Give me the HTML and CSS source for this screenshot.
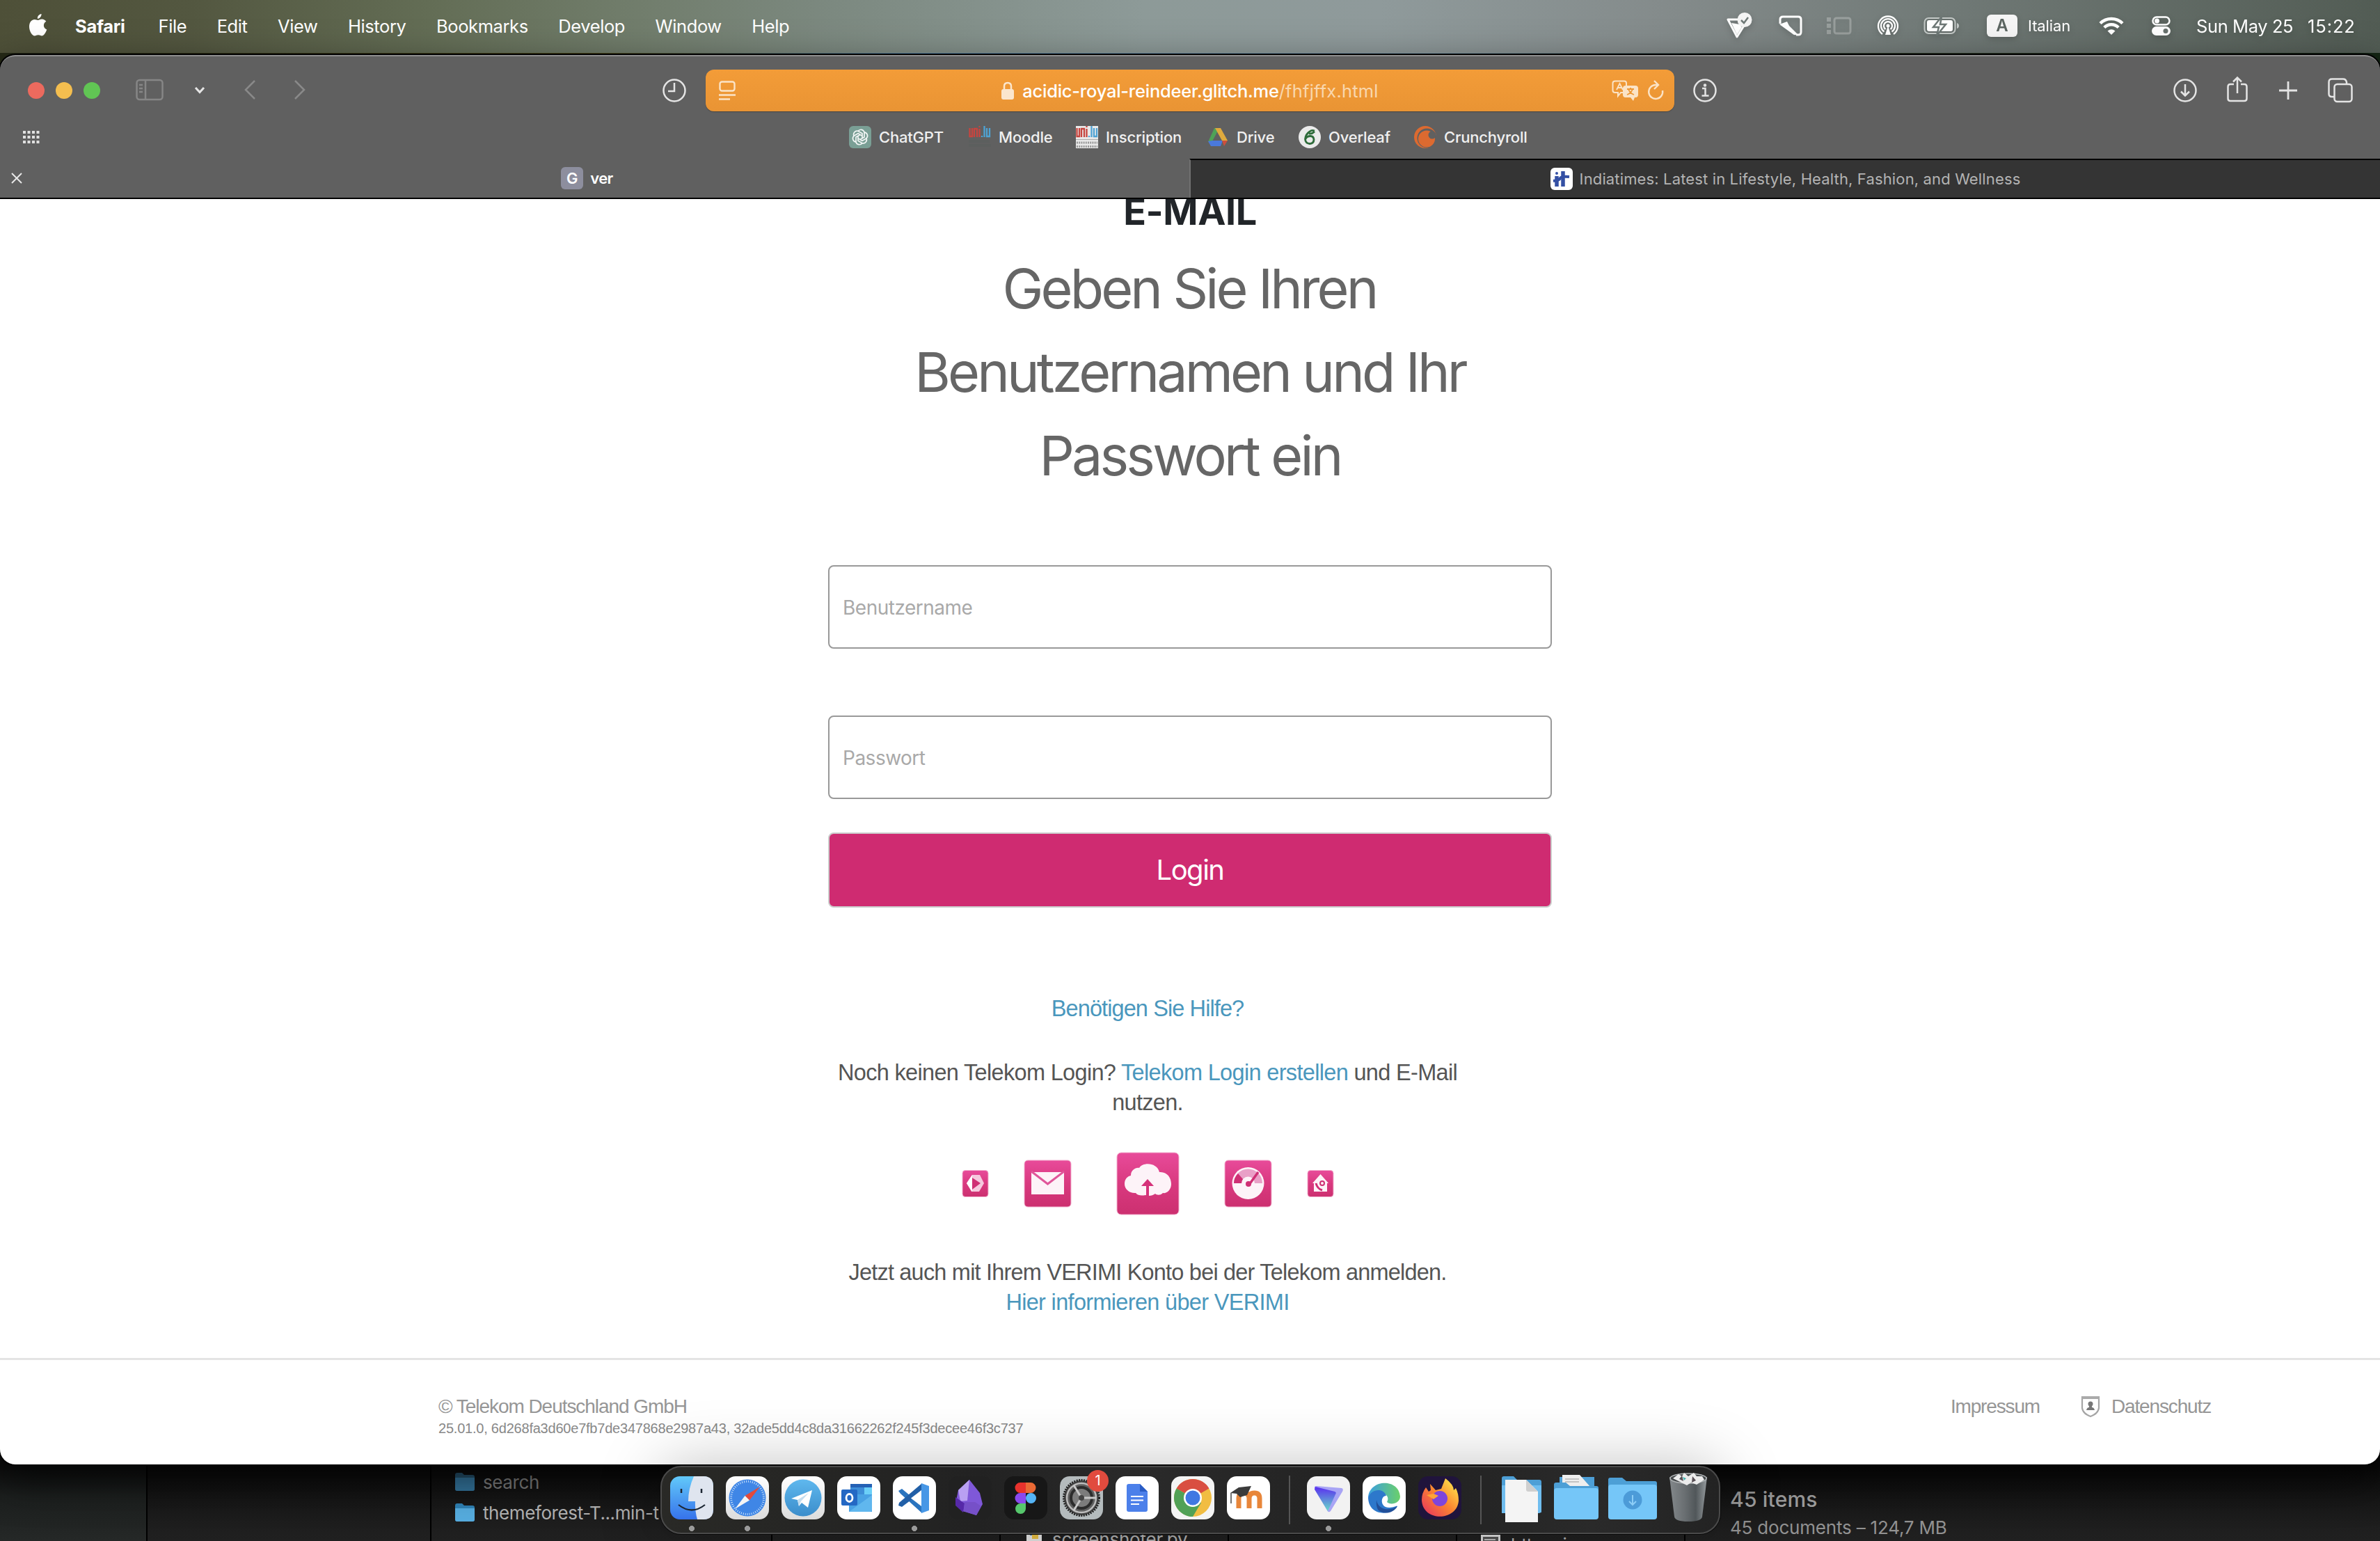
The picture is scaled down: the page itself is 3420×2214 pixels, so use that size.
FILE: index.html
```html
<!DOCTYPE html>
<html lang="de">
<head>
<meta charset="utf-8">
<title>ver</title>
<link rel="stylesheet" href="styles.css">
</head>
<body>
<div class="desktop">

<header class="menubar">
  <nav class="menus">
    <svg class="apple" viewBox="0 0 26 32"><path fill="#fff" d="M18 0c.4 3-2.3 6.800-5.600 6.800C12 3.500 14.800.5 18 0zM13 9c1.500 0 3-1.500 5.800-1.500 2.400 0 4.700 1.300 6 3.300-5 3-4.300 9.800 1 11.800C24 27.500 21.300 31.500 18.700 31.500c-2 0-2.800-1.200-5.200-1.200s-3.300 1.200-5.200 1.200C4.500 31.500.5 24.500.5 18.300.5 11.500 4.500 8 8 8c2.300 0 3.600 1 5 1z"/></svg>
    <b class="m-safari">Safari</b><span>File</span><span>Edit</span><span>View</span><span>History</span><span>Bookmarks</span><span>Develop</span><span>Window</span><span>Help</span>
  </nav>
  <div class="status">
    <svg class="s-vpn" width="38" height="38" viewBox="0 0 38 38"><path d="M2 10h17l6 9-10 16z" fill="none" stroke="#fff" stroke-width="3" stroke-linejoin="round"/><path d="M7 15l12 2 3 4-7 11z" fill="#fff"/><circle cx="26" cy="10.500" r="10.500" fill="#f4f4f4"/><path d="M21 11l4 4 6-8" fill="none" stroke="#707a78" stroke-width="2.500"/></svg>
    <svg class="s-pen" width="34" height="30" viewBox="0 0 34 30"><path d="M2 12V6q0-4 4-4h22q4 0 4 4v18q0 4-4 4h-3" fill="none" stroke="#fff" stroke-width="3"/><path d="M1 13l11-4 3 6 12 12q-4 3-8-1z" fill="#fff"/></svg>
    <svg class="s-stage" width="36" height="26" viewBox="0 0 36 26" opacity=".25"><path fill="#fff" d="M0 1h6v6H0zM0 10h6v6H0zM0 19h6v6H0z"/><rect x="11" y="2" width="23" height="22" rx="3" fill="none" stroke="#fff" stroke-width="3"/></svg>
    <svg class="s-drop" width="32" height="30" viewBox="0 0 32 30" fill="none" stroke="#fff" stroke-width="2.300"><path d="M8 27a14 14 0 1 1 16 0M10.500 23.500a10 10 0 1 1 11 0M12.500 20a6 6 0 1 1 7 0"/><path d="M16 15l4 13h-8z" fill="#fff" stroke="none"/><circle cx="16" cy="15" r="2.500" fill="#fff" stroke="none"/></svg>
    <svg class="s-batt" width="52" height="28" viewBox="0 0 52 28"><rect x="1.500" y="3" width="44" height="22" rx="6" fill="none" stroke="#c3c8c6" stroke-width="2"/><rect x="5" y="6" width="37" height="16" rx="3" fill="#fff"/><path d="M48 10q3 1 3 4t-3 4z" fill="#c3c8c6"/><path d="M26 1L14 16h8l-3 12 13-16h-8z" fill="#fff" stroke="#6d7775" stroke-width="2.500"/></svg>
    <span class="s-key">A</span><span class="s-lang">Italian</span>
    <svg class="s-wifi" width="36" height="26" viewBox="0 0 36 26" fill="none" stroke="#fff" stroke-width="4.500"><path d="M2 9.500a23 23 0 0 1 32 0M7.800 15.500a14.500 14.500 0 0 1 20.400 0"/><path d="M18 26l-5.500-5.500q5.500-4.500 11 0z" fill="#fff" stroke="none"/></svg>
    <svg class="s-cc" width="27" height="28" viewBox="0 0 27 28"><rect x="1.500" y="1.500" width="24" height="11" rx="5.500" fill="none" stroke="#fff" stroke-width="2.500"/><circle cx="7.500" cy="7" r="3.500" fill="#fff"/><rect y="15" width="27" height="13" rx="6.500" fill="#fff"/><circle cx="20" cy="21.500" r="3.500" fill="#68716d"/></svg>
    <span class="s-date">Sun May 25</span><span class="s-time">15:22</span>
  </div>
</header>

<section class="finder">
  <div class="fcol side"></div>
  <div class="fcol c1"></div>
  <div class="fcol c2">
    <div class="frow dim"><svg width="28" height="26" viewBox="0 0 28 26"><path d="M0 3q0-3 3-3h7l3 3h12q3 0 3 3v17q0 3-3 3H3q-3 0-3-3z" fill="#24506b"/><path d="M0 7h28v16q0 3-3 3H3q-3 0-3-3z" fill="#33749c"/></svg>search</div>
    <div class="frow"><svg width="28" height="26" viewBox="0 0 28 26"><path d="M0 3q0-3 3-3h7l3 3h12q3 0 3 3v17q0 3-3 3H3q-3 0-3-3z" fill="#2f81b4"/><path d="M0 7h28v16q0 3-3 3H3q-3 0-3-3z" fill="#56acde"/></svg><span>themeforest-T...min-t</span></div>
  </div>
  <div class="fcol c3"></div>
  <div class="fcol c4"><div class="ffile py"><svg width="22" height="26" viewBox="0 0 22 26"><path fill="#e8e8e8" d="M0 0h22v26H0z"/><path fill="#3f75a8" d="M5 2h9v6H5z"/><path fill="#e9c046" d="M8 7h9v6H8z"/></svg>screenshoter.py</div></div>
  <div class="fcol c5"></div>
  <div class="fcol c6"><div class="ffile png"><svg width="28" height="20" viewBox="0 0 28 20"><path fill="#ddd" d="M0 0h28v20H0z"/><path fill="#555" d="M3 4h22v16H3z"/><path fill="#bbb" d="M5 7h16v2H5z"/></svg>https_j...ge.png</div></div>
  <div class="fcol c7"><p class="items">45 items</p><p class="docs">45 documents – 124,7 MB</p></div>
</section>

<main class="window">
  <div class="toolbar">
    <div class="tl">
      <i class="red"></i><i class="yel"></i><i class="grn"></i>
      <svg class="t-side" width="40" height="32" viewBox="0 0 40 32" fill="none" stroke="#868686" stroke-width="2.500"><rect x="1.500" y="2" width="37" height="28" rx="4"/><path d="M14 2v28M5 9h5M5 14h5M5 19h5"/></svg>
      <svg class="t-chev" width="16" height="12" viewBox="0 0 16 12"><path d="M2 2l6 6.500L14 2" fill="none" stroke="#e5e5e5" stroke-width="3"/></svg>
      <svg class="t-back" width="18" height="30" viewBox="0 0 18 30"><path d="M16 2L3 15l13 13" fill="none" stroke="#898989" stroke-width="2.500"/></svg>
      <svg class="t-fwd" width="18" height="30" viewBox="0 0 18 30"><path d="M2 2l13 13L2 28" fill="none" stroke="#898989" stroke-width="2.500"/></svg>
    </div>
    <svg class="t-clock" width="34" height="34" viewBox="0 0 34 34" fill="none" stroke="#e4e4e4" stroke-width="2.500"><circle cx="17" cy="17" r="15.500"/><path d="M17 6v12H8"/></svg>
    <div class="address">
      <svg width="24" height="28" viewBox="0 0 24 28" fill="none" stroke="#fbe3c6" stroke-width="2.400"><rect x="1.500" y="1.500" width="21" height="13" rx="3"/><path d="M0 20.500h24M0 26.500h16"/></svg>
      <div class="url"><svg width="18" height="26" viewBox="0 0 18 26"><rect y="11" width="18" height="15" rx="3" fill="#fbe6cd"/><path d="M4 12V7q0-5 5-5t5 5v5" fill="none" stroke="#fbe6cd" stroke-width="2.500"/></svg><span class="host">acidic-royal-reindeer.glitch.me</span><span class="path">/fhfjffx.html</span></div>
      <svg width="38" height="30" viewBox="0 0 38 30"><path d="M5 1.500h13q3 0 3 3V15q0 3-3 3h-5l-4 5v-5H5q-3.500 0-3.500-3V4.500q0-3 3.500-3z" fill="none" stroke="#fbe3c6" stroke-width="2"/><path d="M7 14L11.500 5 16 14M8.500 11h6" fill="none" stroke="#fbe3c6" stroke-width="1.800"/><path d="M20 8h14q4 0 4 4v9q0 4-4 4h-1l-2 5-4-5h-7q-4 0-4-4v-9q0-4 4-4z" fill="#fbe3c6"/><path d="M22 13h10M27 11v2M30 13q-2 6-8 8M24 13q2 6 8 8" fill="none" stroke="#ee9835" stroke-width="1.800"/></svg>
      <svg class="reload" width="26" height="30" viewBox="0 0 26 30" fill="none" stroke="#fbe3c6" stroke-width="2.400"><path d="M22 15a10 10 0 1 1-10-8h4M10 1l6 6-6 6"/></svg>
    </div>
    <svg class="t-info" width="34" height="34" viewBox="0 0 34 34" fill="none" stroke="#e4e4e4" stroke-width="2.500"><circle cx="17" cy="17" r="15.500"/><path d="M13 14h4.500v10M12.500 24.500h10"/><circle cx="17" cy="9.500" r="1" /></svg>
    <div class="tr">
      <svg width="34" height="34" viewBox="0 0 34 34" fill="none" stroke="#e4e4e4" stroke-width="2.500"><circle cx="17" cy="17" r="15.500"/><path d="M17 8v16M11 18.500l6 6 6-6"/></svg>
      <svg class="share" width="30" height="38" viewBox="0 0 30 38" fill="none" stroke="#e4e4e4" stroke-width="2.500"><path d="M10 12H5q-3.500 0-3.500 3.500v17Q1.500 36 5 36h20q3.500 0 3.500-3.500v-17Q28.500 12 25 12h-5M15 25V3M9 8.500L15 2.500l6 6"/></svg>
      <svg width="28" height="28" viewBox="0 0 28 28" stroke="#e4e4e4" stroke-width="2.800"><path d="M14 1v26M1 14h26"/></svg>
      <svg width="36" height="36" viewBox="0 0 36 36" fill="none" stroke="#e4e4e4" stroke-width="2.500"><rect x="9.500" y="9" width="25" height="25" rx="4"/><path d="M9 27H6q-4.500 0-4.500-4V6Q1.500 1.500 6 1.500h16Q26 1.500 27 6v3"/></svg>
    </div>
  </div>

  <div class="favbar">
    <svg class="grid" width="24" height="18" viewBox="0 0 24 18" stroke="#e0e0e0" stroke-width="4" stroke-dasharray="4 2.500"><path d="M0 2h24M0 9h24M0 16h24"/></svg>
    <div class="favs">
      <div class="fav f1"><svg viewBox="0 0 32 32"><rect width="32" height="32" rx="6" fill="#7a9f95"/><g fill="none" stroke="#f2f6f5" stroke-width="1.700"><path id="petal" d="M13 7.500a5 5 0 0 1 9 1.500v7l-6 3.500"/><use href="#petal" transform="rotate(60 16 16)"/><use href="#petal" transform="rotate(120 16 16)"/><use href="#petal" transform="rotate(180 16 16)"/><use href="#petal" transform="rotate(240 16 16)"/><use href="#petal" transform="rotate(300 16 16)"/></g></svg><span>ChatGPT</span></div>
      <div class="fav f2"><svg viewBox="0 0 32 32"><g fill="none" stroke="#c7453f" stroke-width="2.300"><path d="M1.500 3v12H5V3M8 16V4h4v12M15.500 4v12"/><path d="M15.500 0v2"/></g><path d="M19 14v2M22.500 0v16M26 3v12h4V3" fill="none" stroke="#4fa3d4" stroke-width="2.300"/><path d="M0 22h30M0 28h32" stroke="#5c5f5e" stroke-width="4"/></svg><span>Moodle</span></div>
      <div class="fav f3"><svg viewBox="0 0 32 32"><path fill="#e9e9e9" d="M0 0h32v32H0z"/><g fill="none" stroke="#c7453f" stroke-width="2.300"><path d="M1.500 3v12H5V3M8 16V4h4v12M15.500 4v12"/><path d="M15.500 0v2"/></g><path d="M19 14v2M22.500 0v16M26 3v12h4V3" fill="none" stroke="#4fa3d4" stroke-width="2.300"/><path d="M0 19.500h32" stroke="#aaa"/><path d="M1 24h30M1 29.500h30" stroke="#999" stroke-width="3" stroke-dasharray="2 1.200"/></svg><span>Inscription</span></div>
      <div class="fav f4"><svg viewBox="0 0 32 32"><path fill="#4fa257" d="M11 3h7L8 22l-6 1z"/><path fill="#dfaa3d" d="M12 3h8l10 18h-8z"/><path fill="#4a79dc" d="M8 21h15l-3 8H6L2 22z"/><path fill="#cc4f3d" d="M22 21h8l-5 8z"/></svg><span>Drive</span></div>
      <div class="fav f5"><svg viewBox="0 0 32 32"><circle cx="16" cy="16" r="16" fill="#ebebeb"/><path d="M23 7q-4-1.500-7 1-6 4-6.500 11 .5 6 6.500 6.500 6-.5 6-6-.5-5-5-5-5 0-7 4M15 11q4 1 8-3" fill="none" stroke="#2f6c3b" stroke-width="2.800"/></svg><span>Overleaf</span></div>
      <div class="fav f6"><svg viewBox="0 0 32 32"><circle cx="16" cy="16" r="16" fill="#dc6a30"/><circle cx="18.500" cy="17.500" r="14" fill="#606060"/><circle cx="18" cy="18.500" r="12" fill="#dc6a30"/><circle cx="26" cy="13" r="5.500" fill="#606060"/></svg><span>Crunchyroll</span></div>
    </div>
  </div>

  <div class="tabs">
    <div class="tab active">
      <svg class="close" width="16" height="16" viewBox="0 0 16 16"><path d="M1 1l14 14M15 1L1 15" stroke="#e8e8e8" stroke-width="2"/></svg>
      <span class="gicon">G</span><b>ver</b>
    </div>
    <div class="tab">
      <svg width="32" height="32" viewBox="0 0 32 32"><rect width="32" height="32" rx="6" fill="#fff"/><path d="M9 12v15M18 5v22" fill="none" stroke="#3450a4" stroke-width="5.500"/><path d="M4 19q9-1 10-4t13-2" fill="none" stroke="#3450a4" stroke-width="4"/><circle cx="9" cy="8" r="2" fill="#3450a4"/></svg>
      <span>Indiatimes: Latest in Lifestyle, Health, Fashion, and Wellness</span>
    </div>
  </div>

  <div class="page">
    <h1>E-MAIL</h1>
    <h2>Geben Sie Ihren<br>Benutzernamen und Ihr<br>Passwort ein</h2>
    <div class="login">
      <div class="field">Benutzername</div>
      <div class="field">Passwort</div>
      <div class="button">Login</div>
    </div>
    <div class="info">
      <p class="help"><a class="w1">Benötigen Sie Hilfe?</a></p>
      <p class="create"><span class="w2">Noch keinen Telekom Login? <a>Telekom Login erstellen</a> und E-Mail</span><br><span class="w3">nutzen.</span></p>
      <svg class="services" width="540" height="96" viewBox="0 0 540 96">
        <defs>
          <linearGradient id="mg" x2="0" y2="1"><stop offset="0" stop-color="#e84b9a"/><stop offset=".5" stop-color="#d9397f"/><stop offset="1" stop-color="#cc3070"/></linearGradient>
        </defs>
        <g fill="url(#mg)" stroke="#f2b3d0" stroke-width="1"><rect x="4" y="29.500" width="37" height="38" rx="4"/><rect x="93" y="15" width="67" height="67" rx="5"/><rect x="226" y="4" width="89" height="89" rx="6"/><rect x="381" y="15" width="67" height="67" rx="5"/><rect x="500" y="29.500" width="37" height="38" rx="4"/></g>
        <path d="M10 48l8-12h11l6 12-7 12H17z" fill="#f5c9de"/><path d="M10 48l8-12v24z" fill="#fff"/><path d="M18 40l12 8-12 9z" fill="#cf2f74"/>
        <path d="M103 32h47v32h-47z" fill="#fdf3f8"/><path d="M103 31l23.500 18L150 31" fill="none" stroke="#e0569a" stroke-width="3"/>
        <path d="M253 62c-8 1-16-5-16-13 0-7 4-11 9-12 0-8 7-12 12-11 5-9 26-8 29 6 11-1 17 8 17 17 0 9-7 14-12 13-4 4-9 3-11 1-4 3-9 4-14 2-5 1-11 1-14-3z" fill="#fdf3f8"/><path d="M270 67V46" stroke="#d5327a" stroke-width="4"/><path d="M261 52l9-10 9 10z" fill="#d5327a"/>
        <circle cx="414.500" cy="48" r="23" fill="#fdf3f8"/><path d="M394 48a20.500 20.500 0 0 1 41 0h-11a9.500 9.500 0 0 0-19 0z" fill="#e9a0c7"/><path d="M394 48q0-8 6-14l7 8q-2 3-2 6z" fill="#cf2f74"/><path d="M416 50l13-18" stroke="#cf2f74" stroke-width="3.500"/><circle cx="415" cy="49" r="4" fill="#cf2f74"/>
        <path d="M507 48l11.500-13L530 48h-2v12h-19V48z" fill="#fdf3f8"/><path d="M512 48q2 8 9 10" stroke="#cf2f74" stroke-width="3" fill="none"/><circle cx="521" cy="48" r="3" fill="none" stroke="#cf2f74" stroke-width="2"/>
      </svg>
      <p class="verimi"><span class="w4">Jetzt auch mit Ihrem VERIMI Konto bei der Telekom anmelden.</span><br><a class="w5">Hier informieren über VERIMI</a></p>
    </div>
    <footer>
      <div><p class="copy">© Telekom Deutschland GmbH</p><p class="ver">25.01.0, 6d268fa3d60e7fb7de347868e2987a43, 32ade5dd4c8da31662262f245f3decee46f3c737</p></div>
      <div class="flinks"><span class="imp">Impressum</span><svg width="28" height="32" viewBox="0 0 28 32"><path d="M2 2h24v16q-1 8-12 12Q3 26 2 18z" fill="none" stroke="#a5a5a5" stroke-width="2.200"/><path d="M1 3h26" stroke="#aaa" stroke-width="4"/><circle cx="14" cy="12" r="3.500" fill="#777"/><path d="M8 21q1-4 4-4v-3h4v3q3 0 4 4z" fill="#777"/></svg><span class="dat">Datenschutz</span></div>
    </footer>
  </div>
</main>

<aside class="dock">
  <svg class="run" viewBox="0 0 62 62"><defs><linearGradient id="fb" x2="0" y2="1"><stop stop-color="#62c9fa"/><stop offset="1" stop-color="#3672ea"/></linearGradient><linearGradient id="gy" x2="0" y2="1"><stop stop-color="#fff"/><stop offset="1" stop-color="#dcdcdc"/></linearGradient><linearGradient id="tg" x2="0" y2="1"><stop stop-color="#5fb8ee"/><stop offset="1" stop-color="#3b8dcb"/></linearGradient></defs><rect width="62" height="62" rx="14" fill="url(#fb)"/><path d="M34 0q-8 18-8 36h10q-.5 14 3 26h9q14 0 14-14V14Q62 0 48 0z" fill="#dfe5ef"/><path d="M16 18v6M45 18v6" stroke="#1c2733" stroke-width="2.500"/><path d="M12 41q19 15 38 0" fill="none" stroke="#1c2733" stroke-width="2.200"/></svg>
  <svg class="run" viewBox="0 0 62 62"><rect width="62" height="62" rx="14" fill="url(#gy)"/><circle cx="31" cy="31" r="26.500" fill="#3f86e6"/><circle cx="31" cy="31" r="23.500" fill="none" stroke="#c4defa" stroke-width="3" stroke-dasharray="1 2"/><path d="M49 15L27.500 28l6.500 6.500z" fill="#e3493b"/><path d="M13 47l14.500-19 6.500 6.500z" fill="#f5f5f5"/></svg>
  <svg viewBox="0 0 62 62"><rect width="62" height="62" rx="14" fill="url(#gy)"/><circle cx="31" cy="31" r="26.500" fill="url(#tg)"/><path d="M14 32l30-12-6 25-9-7-4 5-2-9z" fill="#fff"/><path d="M23 34l16-10-11 12-3 7z" fill="#c4ddef"/></svg>
  <svg viewBox="0 0 62 62"><rect width="62" height="62" rx="14" fill="#fff"/><path fill="#2461b5" d="M19 11h31v10H19z"/><path fill="#3d8ed8" d="M19 16h20v10H19z"/><path fill="#6bd0f8" d="M39 16h11v10H39z"/><path fill="#49a2e4" d="M17 26h33v25H17z"/><path d="M17 51l33-24v21q0 3-3 3z" fill="#60b7ee"/><rect x="6" y="19" width="23" height="23" rx="2" fill="#2468c4"/><ellipse cx="17.500" cy="31" rx="4.500" ry="5.500" fill="none" stroke="#fff" stroke-width="2.800"/></svg>
  <svg class="run" viewBox="0 0 62 62"><rect width="62" height="62" rx="14" fill="#fff"/><path d="M42 10v43L11 25l-3-4 5-3 29 24z" fill="#2a74bf"/><path d="M42 10L9 38l-1 4 5 2 29-22z" fill="#215fa7"/><path d="M41 10l11 4v35l-11 4z" fill="#4797e6"/><path d="M41 20L26 31.500 41 43z" fill="#fff"/></svg>
  <svg viewBox="0 0 62 62"><rect width="62" height="62" rx="14" fill="#212121"/><path d="M30 5l15 19 4 16-9 16-20-6-10-10 4-20z" fill="#7f58d8"/><path d="M30 5L14 20l3 16 10-1z" fill="#b9a0f2"/><path d="M10 30l13 9-2 13-11-10z" fill="#5629a8"/><path d="M23 37h15l9 6-7 13-18-6z" fill="#7650c8"/></svg>
  <svg viewBox="0 0 62 62"><rect width="62" height="62" rx="14" fill="#171717"/><path d="M31 9v15h-8a7.500 7.500 0 0 1 0-15z" fill="#e8322d"/><path d="M31 9h7a7.500 7.500 0 0 1 0 15h-7z" fill="#ea6a35"/><path d="M31 24v15h-8a7.500 7.500 0 0 1 0-15z" fill="#8a49ee"/><circle cx="38.500" cy="31.500" r="7.500" fill="#55b4f6"/><path d="M31 39v7.500a7.500 7.500 0 1 1-8-7.500z" fill="#56c76c"/></svg>
  <div class="badged"><svg viewBox="0 0 62 62"><rect width="62" height="62" rx="14" fill="#b4bbbd"/><circle cx="31" cy="31" r="25" fill="#454545"/><circle cx="31" cy="31" r="25.500" fill="none" stroke="#222" stroke-width="3" stroke-dasharray="2 1.500"/><circle cx="31" cy="31" r="21" fill="#606060" stroke="#bdbdbd" stroke-width="2.500"/><circle cx="31" cy="31" r="15" fill="#7c7c7c" stroke="#2c2c2c" stroke-width="4"/><path d="M31 31h21M31 31L20 13M31 31L20 49" stroke="#c8c8c8" stroke-width="3"/><circle cx="31" cy="31" r="4" fill="#444"/></svg><span class="badge">1</span></div>
  <svg viewBox="0 0 62 62"><rect width="62" height="62" rx="14" fill="#fff"/><path d="M19 11h16l11 11v26q0 3-3 3H19q-3 0-3-3V14q0-3 3-3z" fill="#4c80ea"/><path d="M35 11l11 11H35z" fill="#2a5cc4"/><path d="M22 29h18M22 34.500h18M22 40h12" stroke="#fff" stroke-width="2"/></svg>
  <svg viewBox="0 0 62 62"><rect width="62" height="62" rx="14" fill="#f4f4f4"/><circle cx="31" cy="31" r="27" fill="#f1bd42"/><path d="M31 31L7.600 17.500a27 27 0 0 1 46.800 0z" fill="#d94f41"/><path d="M31 31L7.600 17.500A27 27 0 0 0 31 58l12-20z" fill="#51a156"/><circle cx="31" cy="31" r="13" fill="#fff"/><circle cx="31" cy="31" r="10.500" fill="#4178e2"/></svg>
  <svg viewBox="0 0 62 62"><rect width="62" height="62" rx="14" fill="#fff"/><path d="M17 46V32q0-8 7.500-8t7.500 8v14M32 32q0-8 7.500-8t7.500 8v14" fill="none" stroke="#e8863a" stroke-width="7"/><path d="M5 24l12-8 18-2-6 13-10 3-5-5z" fill="#3b3b3b"/><path d="M6 24v15" stroke="#444" stroke-width="1.500"/></svg>
  <i class="sep"></i>
  <svg class="run" viewBox="0 0 62 62"><defs><linearGradient id="pv" x2="0" y2="1"><stop stop-color="#5a2df0"/><stop offset="1" stop-color="#66dcc9"/></linearGradient></defs><rect width="62" height="62" rx="14" fill="#f2f2f2"/><path d="M14 14l36 3q3 1 1 5L34 50q-3 3-5-1L11 18q-1-4 3-4z" fill="#a8a4f5"/><path d="M12 15l28 7q3 1 1 4L30 50 11 19z" fill="url(#pv)"/></svg>
  <svg viewBox="0 0 62 62"><defs><linearGradient id="ed"><stop stop-color="#3b9fe0"/><stop offset="1" stop-color="#6bd06a"/></linearGradient></defs><rect width="62" height="62" rx="14" fill="#fff"/><path d="M8 31C9 4 52 2 54 29c0 10-14 13-19 8 5-8-4-15-12-13-7 1-13 6-15 7z" fill="url(#ed)"/><path d="M8 31c4-13 22-15 26-3-9 0-9 18 5 17 6 0 10-3 11-2-9 14-41 15-42-12z" fill="#2d78cb"/><path d="M20 34c2 14 18 17 30 9-5 10-20 13-28 5q-3-6-2-14z" fill="#214f99"/></svg>
  <svg viewBox="0 0 62 62"><defs><linearGradient id="fx" x1="1" x2="0" y2="1"><stop offset=".1" stop-color="#ffe14a"/><stop offset=".5" stop-color="#fb8530"/><stop offset="1" stop-color="#e52c63"/></linearGradient></defs><rect width="62" height="62" rx="14" fill="#20143c"/><path d="M5 34q0-10 6-18l4 6 3-2-1-9 8 9 8-2 6-15q12 9 12 17l3-3q4 8 4 18C56 65 6 66 5 34z" fill="url(#fx)"/><circle cx="31" cy="32" r="11" fill="#7e45dc"/><path d="M12 27l10-2 7 3-7 5z" fill="#ffa436"/></svg>
  <i class="sep sep2"></i>
  <svg class="d-docs" viewBox="0 0 58 68"><path d="M1 3q0-3 3-3h14l5 5h32q3 0 3 3v44H1z" fill="#4d9fd6"/><path d="M1 13h57v36q0 4-4 4H1z" fill="#6fbdef"/><path d="M6 5h30l17 17v44H6z" fill="#f4f4f4"/><path d="M36 5l17 17H39q-3 0-3-3z" fill="#cfcfcf"/></svg>
  <svg class="d-fold" viewBox="0 0 64 66"><path d="M8 4h50v20H8z" fill="#4d9fd6"/><path d="M12 1h25l15 17v8H12z" fill="#eee"/><path d="M16 7h20M16 11h20" stroke="#999"/><path d="M0 15q0-3 3-3h14l6 5h38q3 0 3 3v10H0z" fill="#4d9fd6"/><rect y="20" width="64" height="45" rx="4" fill="#75c6f8"/></svg>
  <svg class="d-down" viewBox="0 0 70 60"><path d="M0 3q0-3 3-3h17l6 5h41q3 0 3 3v12H0z" fill="#4d9fd6"/><rect y="10" width="70" height="50" rx="4" fill="#75c6f8"/><circle cx="35" cy="32" r="13.500" fill="#4c9bd8"/><path d="M35 25v13M30 34l5 5 5-5" fill="none" stroke="#8ccdf7" stroke-width="2"/></svg>
  <svg class="d-trash" viewBox="0 0 54 70"><defs><linearGradient id="tr"><stop stop-color="#83888b"/><stop offset=".4" stop-color="#6a6f72"/><stop offset=".7" stop-color="#51575a"/><stop offset="1" stop-color="#969b9e"/></linearGradient></defs><path d="M0 6h54l-7 57q-1 7-20 7T7 63z" fill="url(#tr)"/><ellipse cx="27" cy="8" rx="26" ry="7" fill="#44484a" stroke="#b0b4b6" stroke-width="1.500"/><path d="M5 8l8-6 5 3 3-5 6 5 8-5 4 5 8 0 3 5-11 7-8-3-6 4-8-4z" fill="#ececec"/><path d="M14 9l4-5 2 8zM33 5l5 6-6 3z" fill="#595056"/><path d="M19 6l5 2-3 3z" fill="#45b3b1"/></svg>
</aside>

</div>
</body>
</html>
```
FILE: styles.css
```css
* { box-sizing: border-box; }
body { margin: 0; font-family: Inter, "Liberation Sans", sans-serif; }
h1, h2, p { margin: 0; font-weight: 400; }
svg, i { display: block; flex: none; }
i { font-style: normal; }
span, b, a { white-space: nowrap; }

.desktop {
  position: relative;
  width: 3420px;
  height: 2214px;
  overflow: hidden;
  background: linear-gradient(90deg, #262a17, #514d1c 25%, #5b88aa 38%, #809cab 60%, #35422f 80%, #142514);
}

/* menu bar */
.menubar {
  display: flex;
  justify-content: space-between;
  height: 76px;
  padding: 0 35px 2px 41px;
  color: #fff;
  font-size: 25.5px;
  background: linear-gradient(90deg, #4e5038, #535740 8%, #636d55 18%, #707c6a 26%, #7c8980 35%, #8d9a98 48%, #8f9a9b 58%, #848b8b 70%, #707976 82%, #525c54);
}
.menus, .status { display: flex; align-items: center; }
.menus { letter-spacing: -.4px; }
.menus span { margin-left: 43.5px; }
.apple { width: 27px; height: 32px; margin-top: -2px; }
.menus .m-safari { width: 76px; margin-left: 40px; font-weight: 700; letter-spacing: -.3px; }
.status { filter: drop-shadow(0 3px 4px rgba(0, 0, 0, .18)); }
.s-pen { margin-left: 37px; }
.s-stage { margin-left: 35px; }
.s-drop { margin-left: 36px; }
.s-batt { margin-left: 35px; }
.s-key {
  width: 44px;
  height: 32px;
  margin-left: 39px;
  border-radius: 6px;
  background: #f5f5f5;
  color: #5c6662;
  font: 600 24px/32px Inter, sans-serif;
  text-align: center;
}
.s-lang { width: 60px; margin-left: 15px; font-size: 22px; letter-spacing: -.1px; }
.s-wifi { margin-left: 42px; }
.s-cc { margin-left: 40px; }
.s-date { width: 142px; margin-left: 37px; letter-spacing: -.4px; }
.s-time { width: 69px; margin-left: 18px; letter-spacing: .9px; }

/* file manager behind the browser */
.finder {
  position: absolute;
  left: 0;
  top: 2060px;
  display: flex;
  width: 3420px;
  height: 154px;
  background: linear-gradient(#080808 46px, #151515 90px, #1e1e1e 130px, #202020);
  color: #b2b2b2;
  font-size: 26px;
  letter-spacing: -.4px;
}
.fcol { border-right: 2px solid #000; overflow: hidden; }
.side { width: 212px; background: linear-gradient(#0c0d0d 46px, #1c1f1e 90px, #252827); }
.c1 { width: 408px; }
.c2 { width: 490px; padding: 51px 0 0 34px; }
.c3 { width: 328px; }
.c4, .c5, .c6 { width: 328px; }
.c7 { flex: 1; border: 0; padding: 75px 0 0 64px; }
.frow { display: flex; align-items: center; gap: 12px; height: 36px; margin-bottom: 8px; }
.dim { color: #7d7d7d; }
.ffile { display: flex; gap: 15px; line-height: 32px; white-space: nowrap; letter-spacing: -.2px; }
.py { padding: 136px 0 0 37px; }
.png { padding: 144px 0 0 34px; }
.c4 svg { margin-top: 2px; }
.items { font-size: 30px; font-weight: 500; line-height: 38px; letter-spacing: .2px; color: #a5a5a5; }
.docs { margin-top: 5px; line-height: 34px; letter-spacing: -.2px; color: #929292; }

/* browser window */
.window {
  position: absolute;
  left: 0;
  top: 79px;
  display: flex;
  flex-direction: column;
  width: 3420px;
  height: 2025px;
  border-radius: 22px;
  overflow: hidden;
  background: #606060;
  box-shadow: 0 0 0 2px #000, 0 20px 60px rgba(0, 0, 0, .6);
}
.toolbar {
  display: flex;
  align-items: center;
  height: 100px;
  padding: 0 39px 0 40px;
  border-top: 2px solid #8f8f8f;
  border-radius: 22px 22px 0 0;
}
.tl { display: flex; align-items: center; width: 912px; }
.tl i { width: 24px; height: 24px; margin-right: 16px; border-radius: 50%; }
.red { background: #ec6a5e; }
.yel { background: #f4be4f; }
.grn { background: #61c554; }
.t-side { margin-left: 35px; margin-top: -2px; }
.t-chev { margin-left: 44px; }
.t-back { margin-left: 55px; margin-top: -3px; }
.t-fwd { margin-left: 54px; margin-top: -3px; }
.t-clock { margin-right: 28px; }
.address {
  display: flex;
  align-items: center;
  width: 1392px;
  height: 60px;
  padding: 0 13px 0 19px;
  border-radius: 12px;
  background: linear-gradient(#f39c38, #e99434);
  box-shadow: 0 1px 1px #444;
  font-size: 25.500px;
}
.url { flex: 1; display: flex; align-items: center; justify-content: center; padding-left: 47px; }
.url svg { margin-right: 12px; }
.host { color: #fff; font-weight: 500; letter-spacing: -.25px; }
.path { color: #f9d7ae; letter-spacing: .2px; }
.reload { margin-left: 13px; }
.t-info { margin-left: 27px; }
.tr { display: flex; align-items: center; gap: 43.5px; margin-left: auto; }
.share { margin-top: -4px; }

.favbar { display: flex; align-items: center; height: 49px; padding: 0 0 13px 33px; }
.favs { display: flex; margin-left: 1163px; }
.fav { display: flex; align-items: center; gap: 11px; color: #f0f0f0; font-size: 22px; font-weight: 500; letter-spacing: -.2px; }
.fav svg { width: 32px; height: 32px; }
.f1 { width: 172px; }
.f2 { width: 154px; }
.f3 { width: 188px; }
.f4 { width: 132px; }
.f5 { width: 166px; }

.tabs { display: flex; height: 58px; border-bottom: 2px solid #000; }
.tab {
  display: flex;
  width: 1711px;
  align-items: center;
  justify-content: center;
  gap: 10px;
  background: #343434;
  border-top: 2px solid #000;
  border-left: 2px solid #707070;
  color: #b3b3b3;
  font-size: 22px;
  letter-spacing: .14px;
}
.tab.active { width: 1709px; background: #606060; border: 0; color: #fff; padding-right: 64px; }
.close { margin-left: 16px; margin-right: auto; }
.gicon { width: 32px; height: 32px; border-radius: 6px; background: #8d8e9e; font: 600 22px/32px Inter, sans-serif; text-align: center; }
.active b { margin-right: auto; font-weight: 600; letter-spacing: -.6px; }

/* web page */
.page { flex: 1; display: flex; flex-direction: column; align-items: center; overflow: hidden; background: #fff; }
h1 { height: 54px; margin-top: -16px; color: #212529; font-size: 54px; line-height: 67px; font-weight: 700; letter-spacing: -.5px; }
h2 { margin-top: 30px; color: #666; font-size: 79px; line-height: 120px; text-align: center; letter-spacing: -3.9px; text-indent: -2px; }
.login { width: 1040px; margin-top: 98px; }
.field { height: 120px; margin-bottom: 96px; padding-left: 19px; border: 2px solid #999; border-radius: 8px; color: #a9a9a9; font-size: 28px; line-height: 118px; letter-spacing: -.5px; }
.field + .field { margin-bottom: 48px; }
.button { height: 108px; border: 2px solid #ccc; border-radius: 8px; background: #cf2b71; color: #fff; font-size: 40px; line-height: 104px; text-align: center; letter-spacing: -1.5px; }
.info { width: 1040px; margin-right: 122px; color: #555; font: 32.5px/43px "Liberation Sans", Arial, sans-serif; text-align: center; }
.info a { color: #4a97bd; }
.w1 { letter-spacing: -.9px; }
.w2 { letter-spacing: -.67px; }
.w3 { letter-spacing: -.7px; }
.w4 { letter-spacing: -.8px; }
.w5 { letter-spacing: -.68px; }
.help { margin-top: 124px; }
.create { margin-top: 49px; }
.services { margin: 46px auto 0; }
.verimi { margin-top: 59px; }
footer { display: flex; justify-content: space-between; align-self: stretch; margin-top: 58px; padding: 49px 243px 0 630px; border-top: 3px solid #e4e4e4; color: #969696; font: 28px/36px "Liberation Sans", Arial, sans-serif; }
.copy { letter-spacing: -1.05px; }
.ver { font-size: 20px; line-height: 26px; letter-spacing: -.22px; color: #888; }
.flinks { display: flex; height: 36px; align-items: center; letter-spacing: -1.15px; }
.flinks svg { margin: 0 16px 0 59px; }

/* dock */
.dock {
  position: absolute;
  left: 949px;
  top: 2106px;
  display: flex;
  width: 1523px;
  height: 98px;
  padding: 13px 0 0 12px;
  gap: 18px;
  border: 2px solid #4a4a4a;
  border-radius: 30px;
  background: linear-gradient(90deg, #292926, #222 30%, #2a2a2a 45%, #212121 70%, #2a2a2a 88%, #232323);
  box-shadow: 0 0 0 1px #0a0a0a, 0 0 90px rgba(0, 0, 0, .25);
}
.dock > svg, .badged svg { width: 62px; height: 62px; overflow: visible; }
.dock .run { height: 80px; padding-bottom: 18px; background: radial-gradient(circle at 31px 75px, #9a9a9a 3.700px, transparent 4.300px); }
.badged { position: relative; width: 62px; }
.badge { position: absolute; left: 39px; top: -9px; width: 31px; height: 31px; border-radius: 50%; background: #e14b3e; color: #fff; font-size: 20px; line-height: 31px; text-align: center; }
.sep { width: 2px; height: 70px; margin: -1px 6px 0 9px; background: #555; }
.sep2 { margin-left: 9px; margin-right: 10px; }
.dock .d-docs { width: 58px; height: 68px; }
.dock .d-fold { width: 64px; height: 66px; margin-top: -3px; }
.dock .d-down { width: 70px; height: 60px; margin: 2px 0 0 -4px; }
.dock .d-trash { width: 54px; height: 70px; margin-top: -5px; }
```
